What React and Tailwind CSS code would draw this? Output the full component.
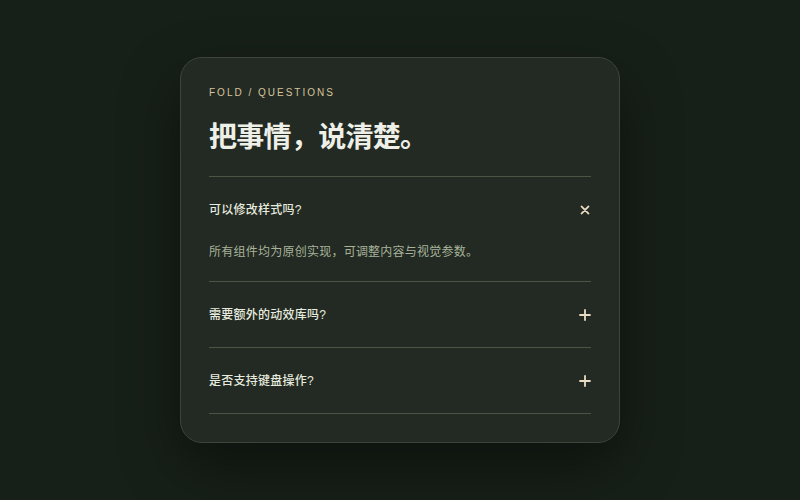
import { useState } from "react";

const faqs = [
  {
    id: 1,
    q: "可以修改样式吗?",
    a: "所有组件均为原创实现，可调整内容与视觉参数。",
  },
  {
    id: 2,
    q: "需要额外的动效库吗?",
    a: "不需要，展开与收起只依赖 CSS 过渡。",
  },
  {
    id: 3,
    q: "是否支持键盘操作?",
    a: "支持，使用 Tab 聚焦、Enter 或空格切换。",
  },
];

function PlusIcon({ open }) {
  return (
    <svg
      width="12"
      height="12"
      viewBox="0 0 12 12"
      className={open ? "rotate-45 transition-transform" : "transition-transform"}
    >
      <path d="M6 1v10M1 6h10" stroke="#e9dcc0" strokeWidth="1.8" strokeLinecap="round" />
    </svg>
  );
}

export default function App() {
  const [openId, setOpenId] = useState(1);

  return (
    <div
      className="w-full h-[500px] flex items-center justify-center bg-[#172018]"
      style={{ fontFamily: '"Liberation Sans", "Noto Sans CJK SC", sans-serif' }}
    >
      <div className="w-[440px] rounded-[22px] border border-[#3b453b] bg-[#222a23] px-[28px] pt-[28px] pb-[28px] shadow-[0_24px_60px_rgba(0,0,0,0.45)]">
        <div className="text-[10px] leading-[14px] tracking-[0.2em] text-[#d6c39c]">
          FOLD / QUESTIONS
        </div>
        <h1 className="mt-[20px] text-[28px] leading-[36px] font-bold tracking-tight text-[#eef0e8]">
          把事情，说清楚。
        </h1>

        <div className="mt-[20px] border-t border-[#4a5546]">
          {faqs.map((item) => {
            const open = openId === item.id;
            return (
              <div key={item.id} className="border-b border-[#4a5546]">
                <button
                  onClick={() => setOpenId(open ? null : item.id)}
                  className="w-full h-[65px] flex items-center justify-between text-left"
                >
                  <span className="text-[12px] font-medium tracking-[0.02em] text-[#e7eadf]">{item.q}</span>
                  <span className="w-[12px] h-[12px] flex items-center justify-center">
                    <PlusIcon open={open} />
                  </span>
                </button>
                {open && (
                  <p className="pt-[1px] pb-[20px] text-[12px] leading-[18px] tracking-[0.02em] text-[#a8b39a]">{item.a}</p>
                )}
              </div>
            );
          })}
        </div>
      </div>
    </div>
  );
}
